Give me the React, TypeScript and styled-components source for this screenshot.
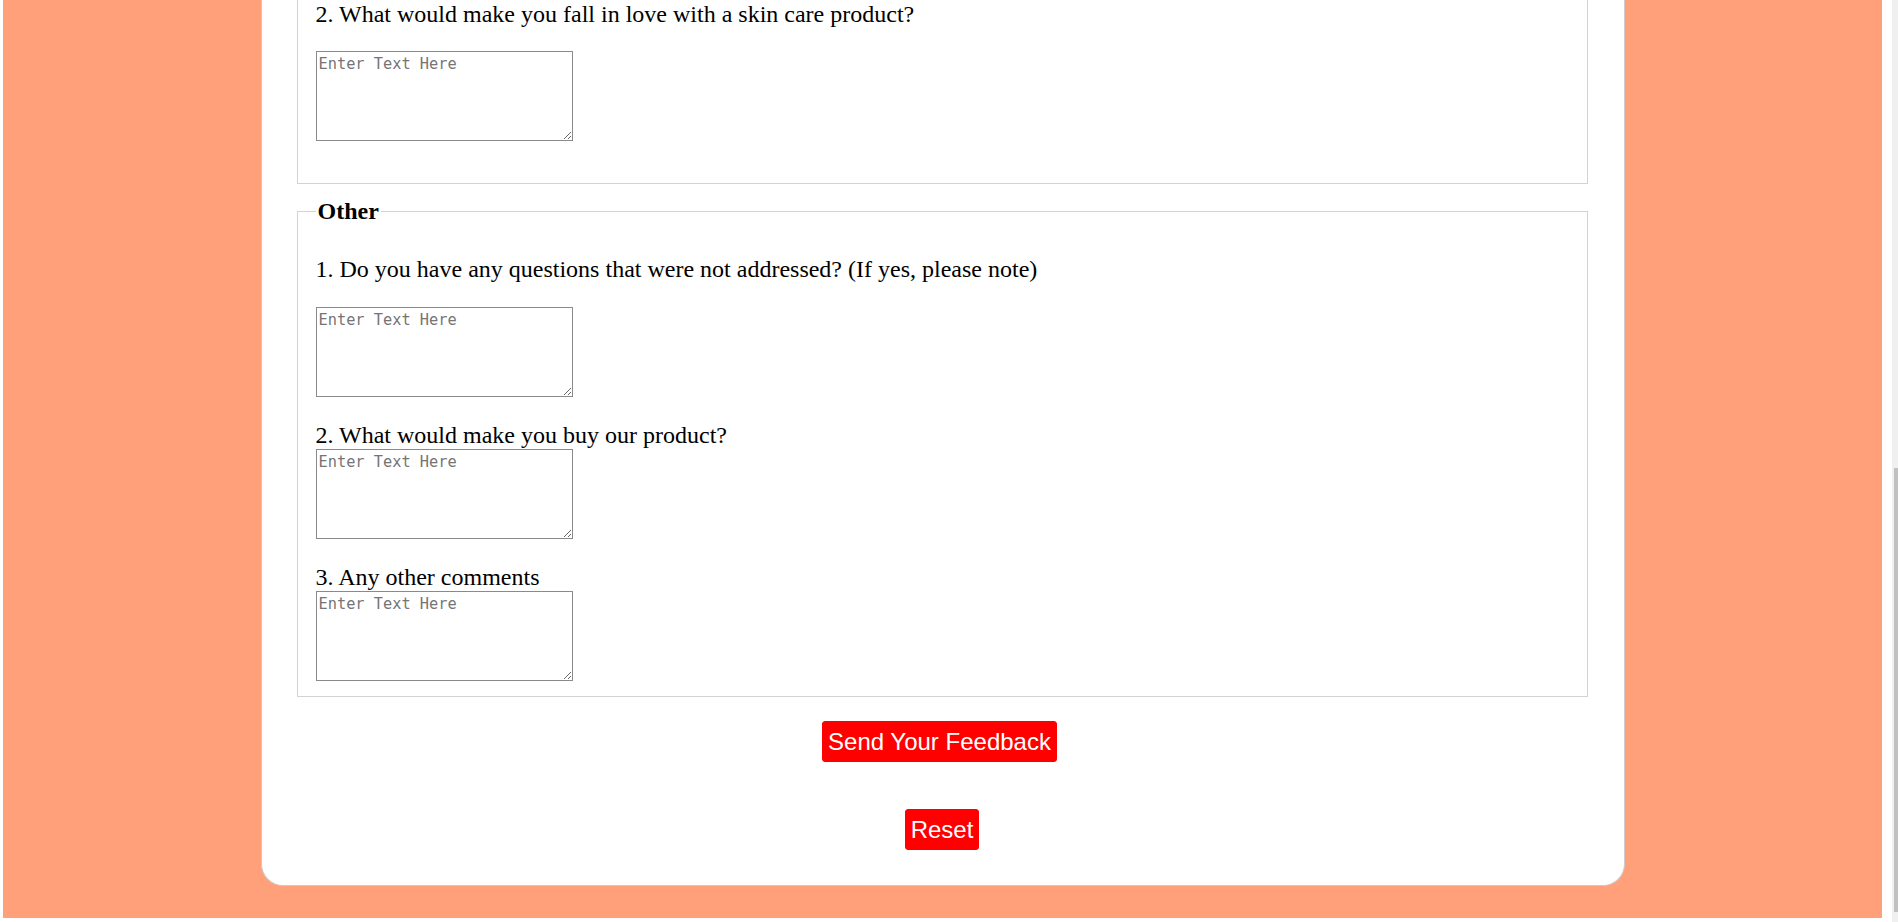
import styled, { createGlobalStyle } from 'styled-components'

const GlobalStyle = createGlobalStyle`
  html, body {
    margin: 0;
    padding: 0;
    background: #ffffff;
  }
  body {
    font-family: 'Liberation Serif', 'Times New Roman', serif;
    color: #000000;
  }
`

const questionsTop = ['2. What would make you fall in love with a skin care product?']

const otherQuestions = [
  '1. Do you have any questions that were not addressed? (If yes, please note)',
  '2. What would make you buy our product?',
  '3. Any other comments',
]

export default function App() {
  return (
    <>
      <GlobalStyle />
      <Screen>
        <Backdrop>
          <Card>
            <Section $cut>
              {questionsTop.map((q) => (
                <div key={q}>
                  <Question>{q}</Question>
                  <Answer $spaced={23} placeholder="Enter Text Here" />
                </div>
              ))}
            </Section>

            <Section>
              <Legend>Other</Legend>
              <Question $gap={30}>{otherQuestions[0]}</Question>
              <Answer $spaced={24} placeholder="Enter Text Here" />
              <Question $gap={24}>{otherQuestions[1]}</Question>
              <Answer placeholder="Enter Text Here" />
              <Question $gap={24}>{otherQuestions[2]}</Question>
              <Answer placeholder="Enter Text Here" />
            </Section>

            <Actions>
              <RedButton type="submit" $nudge={5}>
                Send Your Feedback
              </RedButton>
              <RedButton type="reset">Reset</RedButton>
            </Actions>
          </Card>
        </Backdrop>
        <ScrollTrack>
          <ScrollRail>
            <ScrollThumb />
          </ScrollRail>
        </ScrollTrack>
      </Screen>
    </>
  )
}

const Screen = styled.div`
  display: flex;
  height: 922px;
  overflow: hidden;
`

const Backdrop = styled.div`
  flex: 1;
  background: #ffa07a;
  margin: 0 0 4px 3px;
  padding-bottom: 33px;
`

const Card = styled.form`
  width: 1364px;
  box-sizing: border-box;
  margin: 0 auto;
  background: #ffffff;
  border: 1px solid #cccccc;
  border-top: 0;
  border-radius: 0 0 22px 22px;
  padding: 0 36px 35px 35px;
`

const Section = styled.fieldset<{ $cut?: boolean }>`
  margin: ${(p) => (p.$cut ? '0' : '13px 0 0')};
  padding: 0 18px ${(p) => (p.$cut ? '42px' : '15px')};
  border: 1px solid #d3d3d3;
  ${(p) => p.$cut && 'border-top: 0;'}
  min-width: 0;
`

const Legend = styled.legend`
  font-size: 24px;
  line-height: 28px;
  font-weight: bold;
  padding: 0 2px;
`

const Question = styled.p<{ $gap?: number }>`
  margin: ${(p) => p.$gap ?? 0}px 0 0;
  font-size: 24px;
  line-height: 28px;
`

const Answer = styled.textarea<{ $spaced?: number }>`
  display: block;
  box-sizing: border-box;
  width: 257px;
  height: 90px;
  margin-top: ${(p) => p.$spaced ?? 0}px;
  padding: 3px 2px;
  border: 1px solid #8a8a8a;
  font-family: 'DejaVu Sans Mono', 'Liberation Mono', monospace;
  font-size: 15.3px;
  line-height: 18px;

  &::placeholder {
    color: #757575;
  }
`

const Actions = styled.div`
  display: flex;
  flex-direction: column;
  align-items: center;
  gap: 47px;
  margin-top: 24px;
`

const RedButton = styled.button<{ $nudge?: number }>`
  background: #ff0000;
  color: #ffffff;
  border: 1px solid #ff0000;
  border-radius: 3px;
  padding: 6px 5px;
  margin-right: ${(p) => p.$nudge ?? 0}px;
  font-family: 'Liberation Sans', Arial, sans-serif;
  font-size: 24px;
  line-height: 27px;
  cursor: pointer;
`

const ScrollTrack = styled.div`
  width: 16px;
  display: flex;
  justify-content: flex-end;
  background: #ffffff;
`

const ScrollRail = styled.div`
  width: 6px;
  background: #f0f0f0;
  display: flex;
  flex-direction: column;
  justify-content: flex-end;
  padding-bottom: 10px;
`

const ScrollThumb = styled.div`
  width: 4px;
  height: 444px;
  margin-left: 2px;
  background: #c1c1c1;
`
